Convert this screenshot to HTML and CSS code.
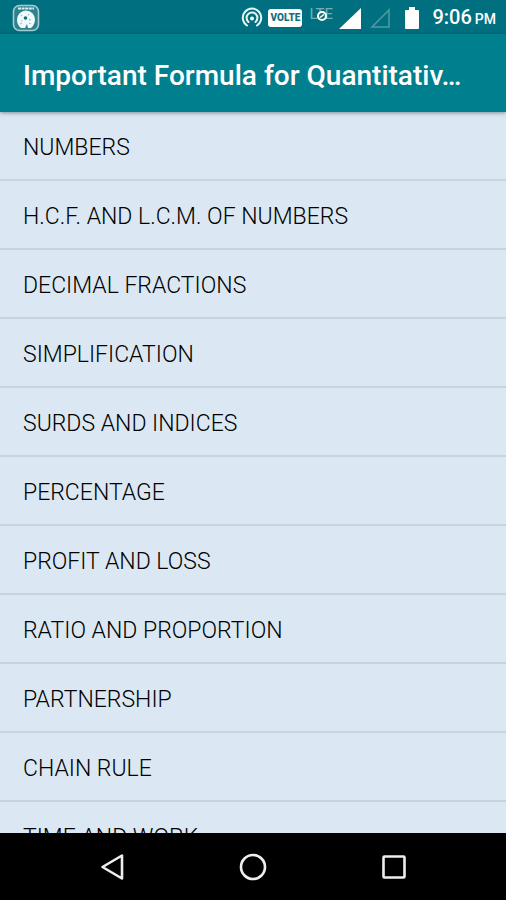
FILE: index.html
```html
<!DOCTYPE html>
<html lang="en">
<head>
<meta charset="utf-8">
<meta name="viewport" content="width=device-width, initial-scale=1">
<title>Important Formula</title>
<link rel="stylesheet" href="styles.css">
</head>
<body>
<div class="status-bar">
  <svg class="app-icon" width="28" height="28" viewBox="0 0 28 28" aria-hidden="true">
    <rect x="1.5" y="1.5" width="25" height="25" rx="6" fill="#2d828d" stroke="#a5cdd1" stroke-width="1.6"/>
    <path d="M6 4.500h16" stroke="#d9f0f1" stroke-width="2" stroke-dasharray="3 .6"/>
    <path d="M14 6.500a9 8.800 0 0 1 9 9c0 4-2 6.500-4 8.500h-3l-1-4-2 4H9c-2.500-2-4-4.500-4-8.500a9 9 0 0 1 9-9z" fill="#f2fbfb"/>
    <circle cx="13.500" cy="14" r="1.800" fill="#16707b"/>
    <path d="M9 11l1 1M17 10l-1 1.500M19 16l-2-.5M9 17l1.500-.5M8 20l2-1M19 20l-2-1" stroke="#9cc8cc" stroke-width="1.300"/>
  </svg>
  <div class="status-icons">
    <svg class="hotspot" width="22" height="22" viewBox="0 0 22 22" fill="none" stroke="#e6f5f6" stroke-width="2" stroke-linecap="round" aria-hidden="true">
      <path d="M6 18.500a9.200 9.200 0 1 1 10 0"/>
      <path d="M7.500 15a5.400 5.400 0 1 1 7 0"/>
      <circle cx="11" cy="11.500" r="2" fill="#fff" stroke="none"/>
    </svg>
    <span class="volte">VOLTE</span>
    <span class="lte">
      <span class="lte-label">LTE</span>
      <svg class="lte-off" width="12" height="12" viewBox="0 0 12 12" aria-hidden="true">
        <circle cx="6" cy="6" r="4" fill="#16707b" stroke="#fff" stroke-width="2"/>
        <path d="M4 7.500L8 4.500" stroke="#fff" stroke-width="1.500"/>
      </svg>
    </span>
    <svg class="signal" width="22" height="21" viewBox="0 0 22 21" aria-hidden="true"><path d="M0 21L22 0v21z" fill="#fff"/></svg>
    <svg class="signal-empty" width="20" height="20" viewBox="0 0 20 20" aria-hidden="true"><path d="M2 19L19 2v17z" fill="none" stroke="#4d9aa3" stroke-width="1.600"/></svg>
    <svg class="battery" width="14" height="22" viewBox="0 0 14 22" aria-hidden="true"><path d="M4 0h6v3h3a1 1 0 0 1 1 1v17a1 1 0 0 1-1 1H1a1 1 0 0 1-1-1V4a1 1 0 0 1 1-1h3z" fill="#fff"/></svg>
    <span class="clock">9:06 <span class="meridiem">PM</span></span>
  </div>
</div>
<header class="app-bar"><h1>Important Formula for Quantitativ…</h1></header>
<main class="content">
  <ul class="topics">
    <li><a href="#numbers">NUMBERS</a></li>
    <li><a href="#hcf">H.C.F. AND L.C.M. OF NUMBERS</a></li>
    <li><a href="#decimal">DECIMAL FRACTIONS</a></li>
    <li><a href="#simplification">SIMPLIFICATION</a></li>
    <li><a href="#surds">SURDS AND INDICES</a></li>
    <li><a href="#percentage">PERCENTAGE</a></li>
    <li><a href="#profit">PROFIT AND LOSS</a></li>
    <li><a href="#ratio">RATIO AND PROPORTION</a></li>
    <li><a href="#partnership">PARTNERSHIP</a></li>
    <li><a href="#chain">CHAIN RULE</a></li>
    <li><a href="#time">TIME AND WORK</a></li>
  </ul>
</main>
<nav class="nav-bar">
  <button type="button" aria-label="Back"><svg width="28" height="28" viewBox="0 0 28 28"><path d="M4.500 14L24 2.500v23z"/></svg></button>
  <button type="button" aria-label="Home"><svg width="28" height="28" viewBox="0 0 28 28"><circle cx="14" cy="14" r="12"/></svg></button>
  <button type="button" aria-label="Recent apps"><svg width="28" height="28" viewBox="0 0 28 28"><rect x="3.500" y="3.500" width="21" height="21" rx="1"/></svg></button>
</nav>
</body>
</html>
```
FILE: styles.css
```css
* {
  box-sizing: border-box;
}

body {
  margin: 0;
  height: 100vh;
  display: flex;
  flex-direction: column;
  overflow: hidden;
  background: #dbe8f3;
  font-family: Roboto, "Liberation Sans", sans-serif;
}

.status-bar {
  flex: none;
  height: 34px;
  padding: 2px 10px 0 12px;
  display: flex;
  align-items: center;
  justify-content: space-between;
  background: #006f7f;
  color: #fff;
}

.status-icons {
  display: flex;
  align-items: center;
}

.status-icons svg {
  flex: none;
}

.volte {
  width: 34px;
  height: 18px;
  margin: 0 7px 0 5px;
  border-radius: 3px;
  background: #fff;
  color: #16707b;
  font-size: 10px;
  line-height: 18px;
  font-weight: 900;
  text-align: center;
}

.lte {
  position: relative;
  width: 26px;
  height: 22px;
  margin-right: 4px;
}

.lte-label {
  display: block;
  color: #6fb0b7;
  font-size: 15px;
  line-height: 14px;
}

.lte-off {
  position: absolute;
  left: 7px;
  top: 3px;
}

.signal-empty {
  margin-left: 9px;
}

.battery {
  margin: 0 13px 0 15px;
}

.clock {
  display: flex;
  gap: 3px;
  align-items: baseline;
  font-size: 20px;
  line-height: 34px;
  font-weight: 500;
  white-space: nowrap;
}

.meridiem {
  font-size: 14px;
}

.app-bar {
  flex: none;
  z-index: 1;
  height: 78px;
  padding: 6px 23px 0;
  display: flex;
  align-items: center;
  background: #00808f;
  box-shadow: 0 1px 4px rgba(0, 0, 0, 0.4);
}

.app-bar h1 {
  margin: 0;
  overflow: hidden;
  color: #fff;
  font-size: 28px;
  line-height: 36px;
  font-weight: 500;
  white-space: nowrap;
}

.content {
  flex: 1;
  min-height: 0;
  overflow: hidden;
}

.topics {
  margin: 0;
  padding: 0;
  list-style: none;
}

.topics a {
  display: block;
  padding: 4px 23px 0;
  border-bottom: 2px solid #c7d4df;
  color: #000;
  font-size: 23px;
  line-height: 63px;
  font-weight: 300;
  text-decoration: none;
}

.nav-bar {
  flex: none;
  height: 67px;
  padding: 0 42px;
  display: flex;
  align-items: center;
  background: #000;
}

.nav-bar button {
  flex: 1;
  height: 67px;
  padding: 0;
  display: flex;
  align-items: center;
  justify-content: center;
  border: 0;
  background: none;
}

.nav-bar svg {
  fill: none;
  stroke: #eee;
  stroke-width: 2.6;
  stroke-linejoin: round;
}
```
